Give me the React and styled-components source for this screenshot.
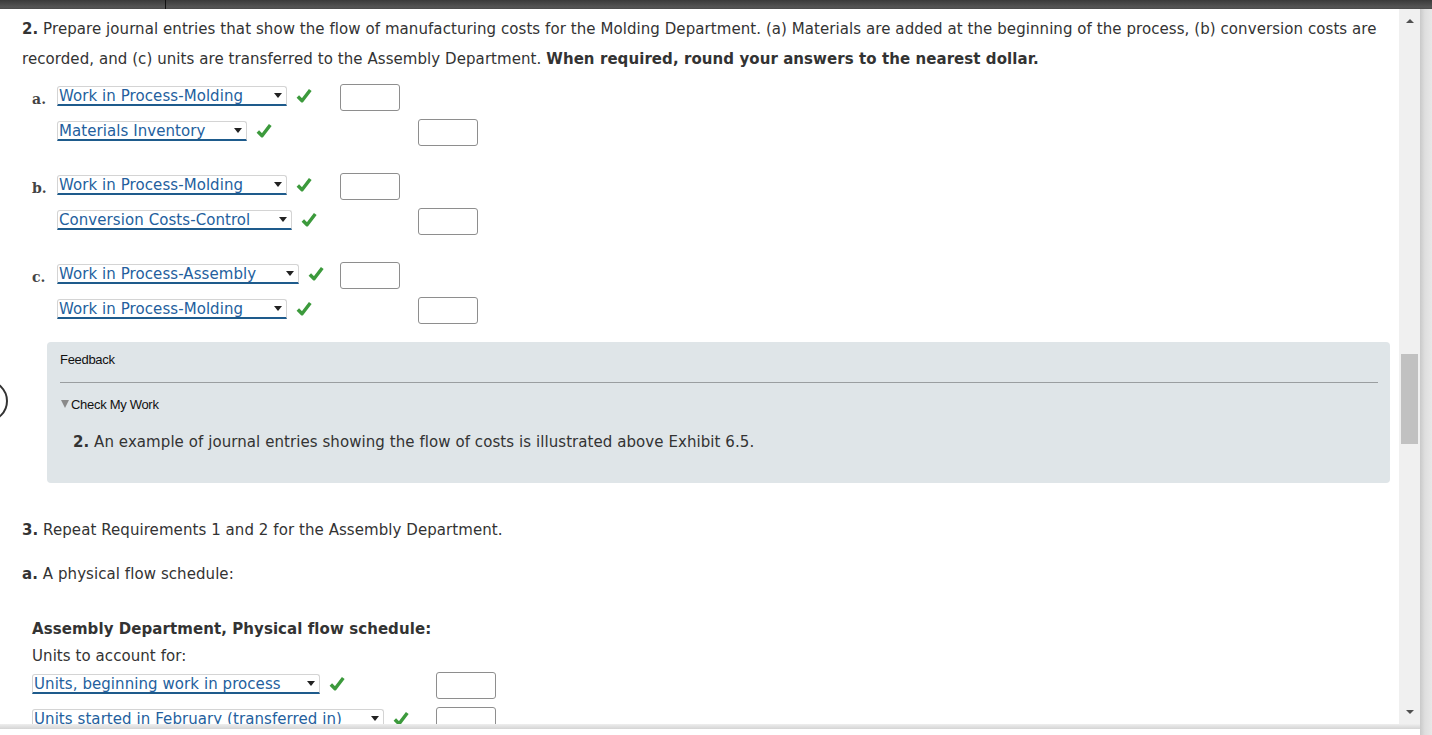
import styled, { createGlobalStyle } from "styled-components";

const GlobalStyle = createGlobalStyle`
  html, body {
    margin: 0;
    padding: 0;
    background: #fff;
    overflow: hidden;
  }
`;

const entries = [
  {
    label: "a.",
    debit: { name: "Work in Process-Molding", width: 230 },
    credit: { name: "Materials Inventory", width: 190 },
  },
  {
    label: "b.",
    debit: { name: "Work in Process-Molding", width: 230 },
    credit: { name: "Conversion Costs-Control", width: 235 },
  },
  {
    label: "c.",
    debit: { name: "Work in Process-Assembly", width: 242 },
    credit: { name: "Work in Process-Molding", width: 230 },
  },
];

function Check() {
  return (
    <CheckMark viewBox="0 0 14 14" aria-hidden="true">
      <path d="M1.6 7.4 L5.3 11.2 L12.5 1.8" fill="none" stroke="#3c9a3c" strokeWidth="3" strokeLinejoin="round" />
    </CheckMark>
  );
}

function AccountSelect({ name, width }) {
  return (
    <SelectBox $width={width}>
      <span>{name}</span>
      <Caret />
    </SelectBox>
  );
}

function Entry({ label, debit, credit }) {
  return (
    <EntryGrid>
      <EntryLabel>{label}</EntryLabel>
      <AccountCell>
        <AccountSelect {...debit} />
        <Check />
      </AccountCell>
      <Amount />
      <span />
      <span />
      <AccountCell>
        <AccountSelect {...credit} />
        <Check />
      </AccountCell>
      <span />
      <Amount />
    </EntryGrid>
  );
}

export default function App() {
  return (
    <>
      <GlobalStyle />
      <Window>
        <TopBar />
        <Body>
          <Frame>
            <Viewport>
              <Content>
                <Paragraph>
                  <b>2.</b> Prepare journal entries that show the flow of manufacturing costs for the Molding Department. (a) Materials are added at the beginning of the process, (b) conversion costs are
                  <br />
                  recorded, and (c) units are transferred to the Assembly Department. <b>When required, round your answers to the nearest dollar.</b>
                </Paragraph>

                <Entries>
                  {entries.map((e) => (
                    <Entry key={e.label} {...e} />
                  ))}
                </Entries>

                <Feedback>
                  <FeedbackTitle>Feedback</FeedbackTitle>
                  <Rule />
                  <Toggle>
                    <ToggleArrow />
                    Check My Work
                  </Toggle>
                  <FeedbackText>
                    <b>2.</b> An example of journal entries showing the flow of costs is illustrated above Exhibit 6.5.
                  </FeedbackText>
                </Feedback>

                <Section>
                  <b>3.</b> Repeat Requirements 1 and 2 for the Assembly Department.
                </Section>
                <SubSection>
                  <b>a.</b> A physical flow schedule:
                </SubSection>

                <Schedule>
                  <ScheduleTitle>Assembly Department, Physical flow schedule:</ScheduleTitle>
                  <ScheduleLine>Units to account for:</ScheduleLine>
                  <ScheduleRow>
                    <AccountCell>
                      <AccountSelect name="Units, beginning work in process" width={288} />
                      <Check />
                    </AccountCell>
                    <Amount />
                  </ScheduleRow>
                  <ScheduleRow>
                    <AccountCell>
                      <AccountSelect name="Units started in February (transferred in)" width={352} />
                      <Check />
                    </AccountCell>
                    <Amount />
                  </ScheduleRow>
                </Schedule>

                <SideRing />
              </Content>
            </Viewport>
            <Scrollbar>
              <ScrollButton>
                <ArrowUp />
              </ScrollButton>
              <Track>
                <Thumb />
              </Track>
              <ScrollButton>
                <ArrowDown />
              </ScrollButton>
            </Scrollbar>
          </Frame>
          <BottomShade />
          <BottomGap />
        </Body>
        <Edge />
      </Window>
    </>
  );
}

const Window = styled.div`
  width: 1432px;
  height: 735px;
  display: grid;
  grid-template-columns: 1fr 12px;
  grid-template-rows: 9px 1fr;
  font-family: "DejaVu Sans", Verdana, sans-serif;
  color: #333;
`;

const TopBar = styled.div`
  grid-column: 1 / 3;
  background: linear-gradient(#3a3a3a, #555 80%, #4a4a4a);
  position: relative;
  &::after {
    content: "";
    position: absolute;
    left: 165px;
    top: 0;
    width: 1px;
    height: 9px;
    background: #111;
  }
`;

const Body = styled.div`
  display: flex;
  flex-direction: column;
  min-height: 0;
`;

const Frame = styled.div`
  flex: 1;
  display: flex;
  min-height: 0;
`;

const Viewport = styled.div`
  flex: 1;
  overflow: hidden;
`;

const Content = styled.div`
  position: relative;
  padding: 5px 9px 0 22px;
  letter-spacing: 0.07px;
`;

const Paragraph = styled.p`
  margin: 0;
  font-size: 15px;
  line-height: 30px;
  white-space: nowrap;
`;

const Entries = styled.div`
  margin-top: 6px;
  padding-left: 10px;
  display: flex;
  flex-direction: column;
  gap: 19px;
`;

const EntryGrid = styled.div`
  display: grid;
  grid-template-columns: 25px 283px 78px 60px;
  grid-auto-rows: 35px;
  align-items: center;
`;

const EntryLabel = styled.span`
  font-family: "DejaVu Serif", Georgia, serif;
  font-weight: bold;
  font-size: 14px;
  color: #444;
  padding-top: 3px;
`;

const AccountCell = styled.div`
  display: flex;
  align-items: center;
  gap: 9px;
`;

const SelectBox = styled.div`
  position: relative;
  box-sizing: border-box;
  width: ${(p) => p.$width}px;
  height: 20px;
  margin-bottom: 3px;
  padding: 0 0 0 1px;
  background: #fff;
  border: 1px solid #d4d4d4;
  border-bottom: 2px solid #1e5b8c;
  border-radius: 3px 3px 0 0;
  color: #245f9e;
  font-size: 15px;
  overflow: hidden;
  white-space: nowrap;
  span {
    display: block;
    line-height: 18px;
  }
`;

const Caret = styled.i`
  position: absolute;
  right: 4px;
  top: 6px;
  width: 0;
  height: 0;
  border-left: 4px solid transparent;
  border-right: 4px solid transparent;
  border-top: 5px solid #222;
`;

const CheckMark = styled.svg`
  width: 16px;
  height: 16px;
  margin-bottom: 4px;
  flex: none;
`;

const Amount = styled.div`
  box-sizing: border-box;
  width: 60px;
  height: 27px;
  border: 1px solid #8e8e8e;
  border-radius: 3px;
  background: #fff;
`;

const Feedback = styled.div`
  margin: 14px 0 0 25px;
  padding: 10px 12px 31px 13px;
  background: #dfe5e8;
  border-radius: 4px;
`;

const FeedbackTitle = styled.div`
  font-family: "Liberation Sans", Arial, sans-serif;
  font-size: 13px;
  letter-spacing: -0.3px;
  line-height: 16px;
  color: #111;
`;

const Rule = styled.div`
  margin-top: 14px;
  height: 1px;
  background: #9a9ea0;
`;

const Toggle = styled.div`
  margin-top: 14px;
  display: flex;
  align-items: center;
  font-family: "Liberation Sans", Arial, sans-serif;
  font-size: 13px;
  letter-spacing: -0.3px;
  line-height: 16px;
  color: #111;
`;

const ToggleArrow = styled.i`
  width: 0;
  height: 0;
  margin: 0 2px 2px 1px;
  border-left: 4px solid transparent;
  border-right: 4px solid transparent;
  border-top: 8px solid #8a8a8a;
`;

const FeedbackText = styled.p`
  margin: 19px 0 0 13px;
  font-size: 15px;
  line-height: 20px;
  color: #333;
`;

const Section = styled.p`
  margin: 32px 0 0;
  font-size: 15px;
  line-height: 30px;
`;

const SubSection = styled(Section)`
  margin-top: 14px;
`;

const Schedule = styled.div`
  margin-top: 26px;
  padding-left: 10px;
`;

const ScheduleTitle = styled.div`
  font-size: 15px;
  font-weight: bold;
  line-height: 28px;
`;

const ScheduleLine = styled.div`
  font-size: 15px;
  line-height: 27px;
  margin-bottom: -2px;
`;

const ScheduleRow = styled.div`
  display: grid;
  grid-template-columns: 404px 60px;
  height: 35px;
  align-items: center;
`;

const SideRing = styled.div`
  position: absolute;
  left: -34px;
  top: 371px;
  width: 38px;
  height: 38px;
  border: 2px solid #333;
  border-radius: 50%;
`;

const Scrollbar = styled.div`
  width: 21px;
  background: #f0f0f0;
  display: flex;
  flex-direction: column;
`;

const ScrollButton = styled.div`
  height: 24px;
  display: flex;
  align-items: center;
  justify-content: center;
`;

const ArrowUp = styled.i`
  border-left: 4px solid transparent;
  border-right: 4px solid transparent;
  border-bottom: 4px solid #505050;
`;

const ArrowDown = styled.i`
  border-left: 4px solid transparent;
  border-right: 4px solid transparent;
  border-top: 4px solid #505050;
`;

const Track = styled.div`
  flex: 1;
  padding: 321px 2px 0;
`;

const Thumb = styled.div`
  height: 90px;
  background: #c1c1c1;
`;

const BottomShade = styled.div`
  height: 5px;
  background: linear-gradient(#eeeeee, #d4d4d4);
`;

const BottomGap = styled.div`
  height: 6px;
  background: #fff;
`;

const Edge = styled.div`
  background: linear-gradient(to right, #c9c9c9, #dedede 40%, #e8e8e8);
`;
